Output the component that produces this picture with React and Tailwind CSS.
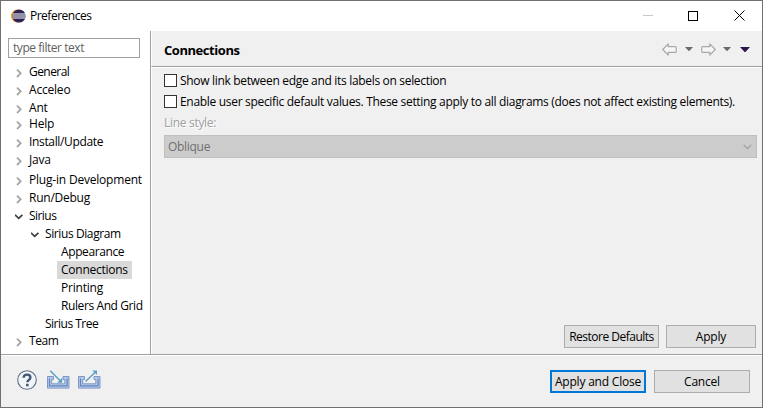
import React from "react";

const TREE = [
  { label: "General", pad: "pl-[14px]", h: "h-[18px]", state: "closed", track: "tracking-[-0.55px]" },
  { label: "Acceleo", pad: "pl-[14px]", h: "h-[18px]", state: "closed", track: "tracking-[-0.2px]" },
  { label: "Ant", pad: "pl-[14px]", h: "h-[16px]", state: "closed", track: "tracking-[-0.2px]" },
  { label: "Help", pad: "pl-[14px]", h: "h-[18px]", state: "closed", track: "tracking-[-0.2px]" },
  { label: "Install/Update", pad: "pl-[14px]", h: "h-[18px]", state: "closed", track: "tracking-[-0.35px]" },
  { label: "Java", pad: "pl-[14px]", h: "h-[20px]", state: "closed", track: "tracking-[-0.2px]" },
  { label: "Plug-in Development", pad: "pl-[14px]", h: "h-[18px]", state: "closed", track: "tracking-[-0.2px]" },
  { label: "Run/Debug", pad: "pl-[14px]", h: "h-[18px]", state: "closed", track: "tracking-[-0.25px]" },
  { label: "Sirius", pad: "pl-[14px]", h: "h-[18px]", state: "open", track: "tracking-[-0.55px]" },
  { label: "Sirius Diagram", pad: "pl-[30px]", h: "h-[18px]", state: "open", track: "tracking-[-0.4px]" },
  { label: "Appearance", pad: "pl-[46px]", h: "h-[18px]", track: "tracking-[-0.4px]" },
  { label: "Connections", pad: "pl-[46px]", h: "h-[18px]", selected: true, track: "tracking-[-0.25px]" },
  { label: "Printing", pad: "pl-[46px]", h: "h-[18px]", track: "tracking-[-0.2px]" },
  { label: "Rulers And Grid", pad: "pl-[46px]", h: "h-[18px]", track: "tracking-[-0.4px]" },
  { label: "Sirius Tree", pad: "pl-[30px]", h: "h-[17px]", track: "tracking-[-0.5px]" },
  { label: "Team", pad: "pl-[14px]", h: "h-[18px]", state: "closed", track: "tracking-[-0.4px]" },
];

function Expander({ state }) {
  return (
    <svg className="h-[18px] w-[10px] shrink-0" viewBox="0 0 10 18" fill="none">
      {state === "closed" && <path d="M2 6.6 5.7 10.3 2 14" stroke="#a6a6a6" strokeWidth="1.8" />}
      {state === "open" && <path d="M0 7.8 3.7 11.3 7.4 7.8" stroke="#404040" strokeWidth="1.8" />}
    </svg>
  );
}

function TreeRow({ label, pad, h, state, selected, track }) {
  return (
    <div className={`flex ${h} ${pad} leading-[18px]`}>
      <Expander state={state} />
      <span className={`h-[18px] px-[4px] ${track} ${selected ? "w-[75px] shrink-0 bg-[#d9d9d9]" : ""}`}>{label}</span>
    </div>
  );
}

function Logo() {
  return (
    <svg className="h-[14px] w-[15px]" viewBox="0 0 15 14">
      <circle cx="6.5" cy="7" r="6.5" fill="#f7941e" />
      <circle cx="8" cy="7" r="6.6" fill="#2c2255" />
      <path d="M1.8 5h12.4M1.5 7h13M1.8 9h12.4" stroke="#fff" strokeWidth="1" />
    </svg>
  );
}

function Arrow({ flip }) {
  return (
    <svg className={`h-[13px] w-[15px] ${flip ? "-scale-x-100" : ""}`} viewBox="0 0 15 13">
      <path d="M.8 6.5 6.2.9v2.7h7q1 0 1 1v3.8q0 1-1 1h-7v2.7Z" fill="#f6f6f6" stroke="#a8a8a8" strokeWidth="1.2" strokeLinejoin="round" />
    </svg>
  );
}

function Caret({ color, big }) {
  return (
    <svg className={big ? "h-[5px] w-[10px]" : "h-[4px] w-[8px]"} viewBox="0 0 10 5" preserveAspectRatio="none">
      <path d="M0 0h10L5.4 5h-.8Z" fill={color} />
    </svg>
  );
}

function Tray({ out }) {
  return (
    <svg className="h-[20px] w-[23px]" viewBox="0 0 23 20">
      <path d="M.5 6.5h6v3H4.7v4.3h13.1V9.5H16v-3h6v11.6H.5Z" fill="#b4c8e8" stroke="#7d97c8" strokeWidth="1" />
      <path d="M2.5 8.5v7.3h17.6V8.5" fill="none" stroke="#6483bd" strokeWidth="1.2" />
      {out ? (
        <g>
          <path d="M7.5 11.5 18 1.5" stroke="#5aa0c6" strokeWidth="1.5" fill="none" />
          <path d="M14.3.4H19v4.7Z" fill="#5aa0c6" />
        </g>
      ) : (
        <g>
          <path d="M3.2.8 14 11.5" stroke="#5aa0c6" strokeWidth="1.5" fill="none" />
          <path d="M15.2 7.8v5h-5Z" fill="#5aa0c6" />
        </g>
      )}
    </svg>
  );
}

function Check({ label, track }) {
  return (
    <label className="flex h-[21px] items-center">
      <span className="mr-[3px] h-[13px] w-[13px] shrink-0 border border-[#333] bg-white" />
      <span className={`whitespace-nowrap leading-[19px] ${track}`}>{label}</span>
    </label>
  );
}

function Button({ children, className }) {
  return (
    <button className={`flex h-[23px] items-center justify-center whitespace-nowrap bg-[#e1e1e1] leading-[19px] ${className}`}>
      {children}
    </button>
  );
}

export default function App() {
  return (
    <div className="flex h-[408px] w-[763px] flex-col overflow-hidden border border-[#707070] bg-[#f0f0f0] font-['Open_Sans','Noto_Sans',sans-serif] text-[12px] leading-[18px] text-black">
      <header className="flex h-[30px] shrink-0 items-center bg-white pb-px pl-[10px]">
        <Logo />
        <span className="ml-[4px] leading-[19px] tracking-[-0.5px]">Preferences</span>
        <svg className="ml-auto mr-[16px] h-[11px] w-[104px]" viewBox="0 0 104 11" fill="none">
          <path d="M1 5.5h10" stroke="#c8c8c8" />
          <path d="M46.5 1v9h9v-9Z" stroke="#000" shapeRendering="crispEdges" />
          <path d="M92.5.5 102.5 10.5M102.5.5 92.5 10.5" stroke="#000" />
        </svg>
      </header>

      <div className="flex h-[323px] shrink-0">
        <aside className="w-[149px] shrink-0 bg-white pt-[7px]">
          <div className="ml-[7px] h-[20px] w-[132px] border border-[#a0a0a0] pl-[4px] leading-[18px] tracking-[-0.45px] text-[#606060]">
            type filter text
          </div>
          <nav className="mt-[5px] whitespace-nowrap">
            {TREE.map((row) => (
              <TreeRow key={row.label} {...row} />
            ))}
          </nav>
        </aside>

        <main className="flex flex-1 flex-col border-l border-[#a0a0a0]">
          <div className="flex h-[36px] shrink-0 items-center border-b border-l border-b-[#a0a0a0] border-l-white pl-[12px] pr-[12px]">
            <h1 className="pt-[3px] text-[13px] font-bold tracking-[-0.45px]">Connections</h1>
            <div className="ml-auto flex items-center pt-px">
              <Arrow />
              <span className="ml-[8px] mr-[8px] flex"><Caret color="#6a6a6a" /></span>
              <Arrow flip />
              <span className="ml-[7px] mr-[9px] flex"><Caret color="#6a6a6a" /></span>
              <Caret color="#2a1648" big />
            </div>
          </div>
          <div className="flex flex-1 flex-col border-l border-t border-white pl-[12px] pr-[5px] pt-[2px]">
            <Check label="Show link between edge and its labels on selection" track="tracking-[-0.32px]" />
            <Check label="Enable user specific default values. These setting apply to all diagrams (does not affect existing elements)." track="tracking-[-0.31px]" />
            <div className="mt-[2px] h-[21px] tracking-[-0.3px] text-[#a0a0a0] [text-shadow:1px_1px_0_#fff]">Line style:</div>
            <div className="flex h-[23px] items-center border border-[#bfbfbf] bg-[#ccc] pl-[3px] pr-[4px] text-[#707070]">
              <span className="leading-[19px] tracking-[-0.3px]">Oblique</span>
              <svg className="ml-auto h-[6px] w-[9px]" viewBox="0 0 9 6" fill="none">
                <path d="M.7.8 4.5 4.6 8.3.8" stroke="#a0a0a0" strokeWidth="1.2" />
              </svg>
            </div>
            <div className="mb-[6px] mr-px mt-auto flex justify-end gap-[7px]">
              <Button className="w-[95px] border border-[#adadad] tracking-[-0.5px]">Restore Defaults</Button>
              <Button className="w-[90px] border border-[#adadad] tracking-[-0.2px]">Apply</Button>
            </div>
          </div>
        </main>
      </div>

      <footer className="flex flex-1 items-start border-t border-[#a0a0a0] shadow-[inset_0_1px_0_#fff]">
        <div className="flex pl-[16px] pt-[15px]">
          <svg className="h-[21px] w-[20px]" viewBox="0 0 20 21" fill="none">
            <circle cx="10" cy="10" r="9.3" fill="#f2f5f8" stroke="#5a6e87" strokeWidth="1.1" />
            <path d="M6.6 7.8C6.6 5.5 8 4.6 10 4.6s3.4 1 3.4 2.9c0 2.3-3 2.4-3 4.7" stroke="#3f5878" strokeWidth="2.4" />
            <path d="M9.1 13.8h2.5v2.5H9.1z" fill="#3f5878" />
          </svg>
          <span className="ml-[10px]"><Tray /></span>
          <span className="ml-[8px]"><Tray out /></span>
        </div>
        <div className="ml-auto mr-[12px] mt-[15px] flex gap-[8px]">
          <Button className="w-[96px] border-2 border-[#0078d7] tracking-[-0.2px]">Apply and Close</Button>
          <Button className="w-[96px] border border-[#adadad] tracking-[-0.2px]">Cancel</Button>
        </div>
      </footer>
    </div>
  );
}
